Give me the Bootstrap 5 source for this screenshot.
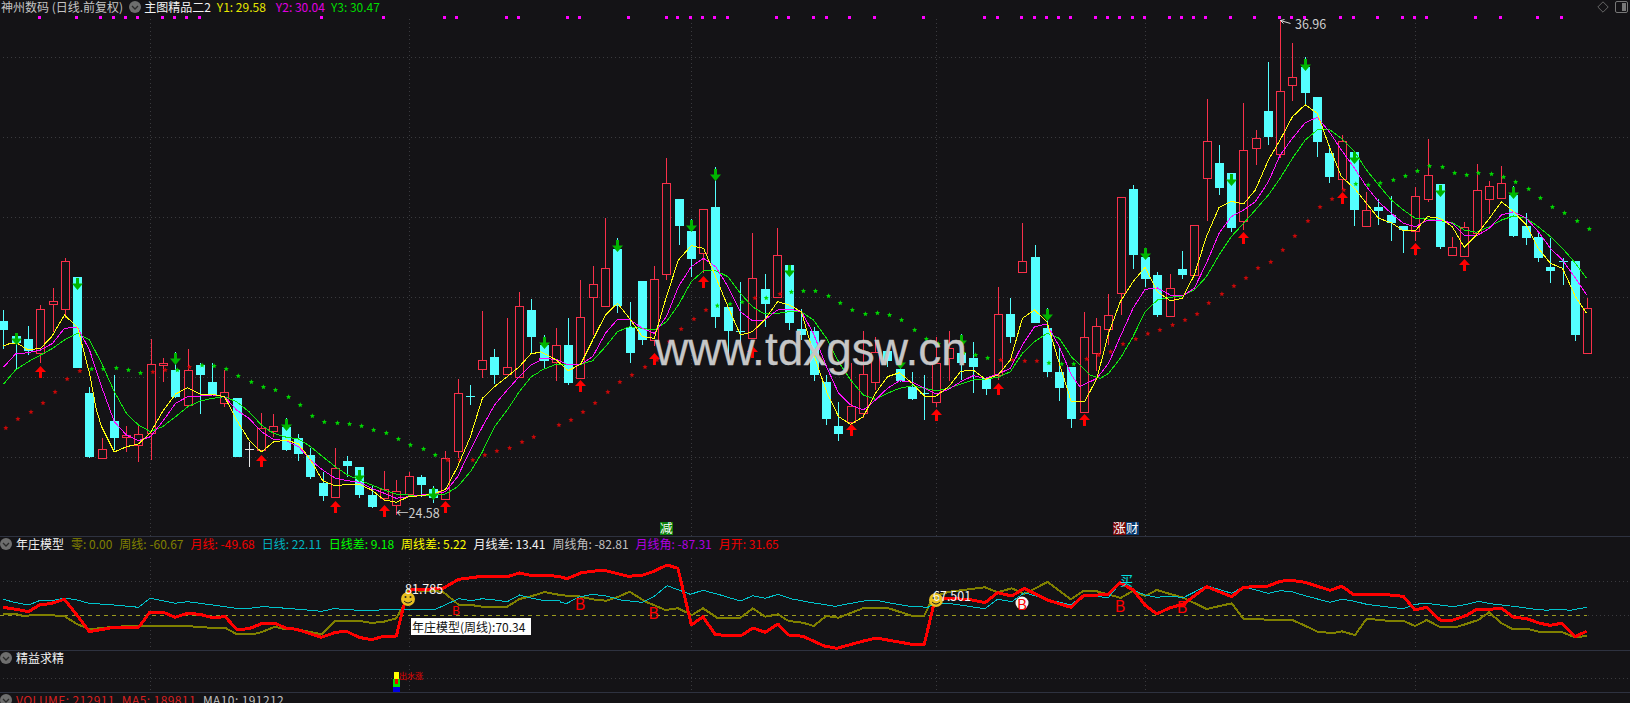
<!DOCTYPE html>
<html lang="zh-CN">
<head>
  <meta charset="UTF-8" />
  <meta name="viewport" content="width=device-width, initial-scale=1.0"/>
  <title>神州数码</title>
  <link href="https://cdn.jsdelivr.net/npm/bootstrap@5.3.3/dist/css/bootstrap.min.css" rel="stylesheet">
  <style>
    html, body { background: #141316; overflow: hidden; }
    .chart-app { height: 703px; width: 1630px; font-family: "Noto Sans CJK SC", "Liberation Sans", sans-serif; }
    .pane { border-bottom: 1px solid #2e3240; flex: none; }
    .pane-main { height: 537px; }
    .pane-model { height: 114px; }
    .pane-fine { height: 42px; }
    .pane-vol { height: 10px; border-bottom: 0; overflow: hidden; }
    .pane-head { height: 14px; font-size: 12px; line-height: 14px; white-space: nowrap; gap: 7px; padding-left: 1px; }
    .pane-main .pane-head { gap: 6px; }
    .pane-vol .pane-head { letter-spacing: .4px; }
    .pane svg.plot { display: block; }
    .chev { width: 12px; height: 12px; flex: none; }
    .chev-tight { margin-right: -3px; margin-left: -1px; }
    .shift-left { margin-left: -3px; }
    .c-title { color: #c4c4c4; }
    .c-y1 { color: #e8e800; }
    .c-y2 { color: #e000e0; }
    .c-y3 { color: #00dc00; }
    .c-olive { color: #808000; }
    .c-red { color: #f00000; }
    .c-teal { color: #00b4c0; }
    .c-lime { color: #00ff00; }
    .c-yellow { color: #ffff00; }
    .c-white { color: #f2f2f2; }
    .c-gray { color: #c0c0c0; }
    .c-purple { color: #b000e0; }
    .c-vol { color: #d82020; }
    .head-icons { right: 2px; top: 1px; gap: 6px; }
    .hint { left: 411px; top: 81px; width: 120px; height: 17px; background: #fff; color: #111; font-size: 12px; line-height: 17px; padding-left: 1px; white-space: nowrap; }
    text { font-family: "Noto Sans CJK SC", "Liberation Sans", sans-serif; }
    .grid { stroke: #3a3a3e; stroke-width: 1; stroke-dasharray: 1 3; shape-rendering: crispEdges; }
    .watermark { font-family: "Liberation Sans", Arial, sans-serif; font-size: 46px; fill: #c6c6c6; stroke: #c6c6c6; stroke-width: .3px; }
  </style>
</head>
<body>

<div class="chart-app d-flex flex-column">

  <!-- main chart -->
  <section class="pane pane-main position-relative">
    <div class="pane-head d-flex align-items-center">
      <span class="c-title">神州数码 (日线.前复权)</span>
      <svg class="chev" viewBox="0 0 12 12"><circle cx="6" cy="6" r="6" fill="#6e6e6e"/><path d="M3 5l3 3 3-3" fill="none" stroke="#2a2a2a" stroke-width="1.3"/></svg>
      <span class="c-white shift-left">主图精品二2</span>
      <span class="c-y1">Y1: 29.58</span>
      <span class="c-y2 ms-1">Y2: 30.04</span>
      <span class="c-y3">Y3: 30.47</span>
    </div>
    <div class="head-icons position-absolute d-flex align-items-center">
      <svg width="12" height="12" viewBox="0 0 12 12"><path d="M6 .8L11.2 6 6 11.2.8 6z" fill="none" stroke="#666"/></svg>
      <svg width="13" height="12" viewBox="0 0 13 12"><rect x=".5" y=".5" width="12" height="11" rx="1.5" fill="none" stroke="#777"/><rect x="7" y="2" width="4" height="8" fill="#777"/></svg>
    </div>
    <svg class="plot" width="1630" height="522" viewBox="0 14 1630 522">
      <g id="mainPlot"></g>
      <text x="396" y="518" fill="#cfcfcf" font-size="12.5">←24.58</text>
      <path d="M1280.5 20.5l10 3M1280.5 20.5l4-1M1280.5 20.5l3 3" stroke="#ddd" fill="none"/>
      <text x="1295" y="29" fill="#cfcfcf" font-size="12.5">36.96</text>
      <text class="watermark" x="655" y="365">www.tdxgsw.cn</text>
      <rect x="660" y="522" width="13" height="13" fill="#0a7d0a"/>
      <text x="660" y="533" fill="#fff" font-size="12.5">减</text>
      <rect x="1113" y="522" width="13" height="13" fill="#780808"/>
      <text x="1113" y="533" fill="#fff" font-size="12.5">涨</text>
      <rect x="1126" y="522" width="13" height="13" fill="#063a70"/>
      <text x="1126" y="533" fill="#fff" font-size="12.5">财</text>
    </svg>
  </section>

  <!-- year model -->
  <section class="pane pane-model position-relative">
    <div class="pane-head d-flex align-items-center">
      <svg class="chev chev-tight" viewBox="0 0 12 12"><circle cx="6" cy="6" r="6" fill="#6e6e6e"/><path d="M3 5l3 3 3-3" fill="none" stroke="#2a2a2a" stroke-width="1.3"/></svg>
      <span class="c-white">年庄模型</span>
      <span class="c-olive">零: 0.00</span>
      <span class="c-olive">周线: -60.67</span>
      <span class="c-red">月线: -49.68</span>
      <span class="c-teal">日线: 22.11</span>
      <span class="c-lime">日线差: 9.18</span>
      <span class="c-yellow">周线差: 5.22</span>
      <span class="c-white">月线差: 13.41</span>
      <span class="c-gray">周线角: -82.81</span>
      <span class="c-purple">月线角: -87.31</span>
      <span class="c-red">月开: 31.65</span>
    </div>
    <svg class="plot" width="1630" height="99" viewBox="0 551 1630 99">
      <g id="modelPlot"></g>
      <circle cx="408" cy="599" r="7" fill="#e8c020"/>
      <circle cx="405.5" cy="597" r="1" fill="#222"/><circle cx="410.5" cy="597" r="1" fill="#222"/>
      <path d="M404 601q4 4 8 0" fill="none" stroke="#222"/>
      <circle cx="936" cy="600" r="7" fill="#e8c020"/>
      <circle cx="933.5" cy="598" r="1" fill="#222"/><circle cx="938.5" cy="598" r="1" fill="#222"/>
      <path d="M932 602q4 4 8 0" fill="none" stroke="#222"/>
      <text x="405" y="594" fill="#f4f4f4" font-size="12.5">81.785</text>
      <text x="933" y="601" fill="#f4f4f4" font-size="12.5">67.501</text>
      <circle cx="1022" cy="603" r="6.5" fill="#f4f4f4"/>
      <text x="456" y="615" fill="#f00" font-size="12" text-anchor="middle">B</text>
      <text x="580" y="610" fill="#f00" font-size="16" text-anchor="middle">B</text>
      <text x="653.5" y="619" fill="#f00" font-size="16" text-anchor="middle">B</text>
      <text x="1022" y="610" fill="#f00" font-size="15" text-anchor="middle">B</text>
      <text x="1120" y="612" fill="#f00" font-size="16" text-anchor="middle">B</text>
      <text x="1182" y="613" fill="#f00" font-size="16" text-anchor="middle">B</text>
      <text x="1120" y="585" fill="#00e0e0" font-size="13">买</text>
    </svg>
    <div class="hint position-absolute">年庄模型(周线):70.34</div>
  </section>

  <!-- fine -->
  <section class="pane pane-fine">
    <div class="pane-head d-flex align-items-center">
      <svg class="chev chev-tight" viewBox="0 0 12 12"><circle cx="6" cy="6" r="6" fill="#6e6e6e"/><path d="M3 5l3 3 3-3" fill="none" stroke="#2a2a2a" stroke-width="1.3"/></svg>
      <span class="c-white">精益求精</span>
    </div>
    <svg class="plot" width="1630" height="27" viewBox="0 665 1630 27">
      <g id="finePlot"></g>
      <rect x="394" y="672" width="5" height="7" fill="#ffff00"/>
      <rect x="393" y="679" width="7" height="8" fill="#00e000"/>
      <rect x="395" y="679" width="3" height="5" fill="#f00000"/>
      <rect x="393" y="687" width="7" height="5" fill="#0000e0"/>
      <text x="399" y="679" fill="#f00000" font-size="8">出水涨</text>
    </svg>
  </section>

  <!-- volume, cut by window bottom -->
  <section class="pane pane-vol">
    <div class="pane-head d-flex align-items-center">
      <svg class="chev chev-tight" viewBox="0 0 12 12"><circle cx="6" cy="6" r="6" fill="#6e6e6e"/><path d="M3 5l3 3 3-3" fill="none" stroke="#2a2a2a" stroke-width="1.3"/></svg>
      <span class="c-vol">VOLUME: 212911</span>
      <span class="c-vol">MA5: 189811</span>
      <span class="c-gray">MA10: 191212</span>
    </div>
  </section>
</div>

<script>
  const BG = "#141316", RED = "#f8304a", CYAN = "#54ffff";
  const stepX = 12.277;
  const cx = i => Math.round(3.4 + stepX * i);

  // type (1 red, 0 cyan, 2 white), high, body top, body bottom, low
  const candles = [
    [0,310,321,330,349],[0,333,336,343,369],[0,326,339,351,355],[1,305,309,353,363],[1,288,301,304,332],
    [1,258,261,309,318],[0,277,277,368,368],[0,387,393,457,458],[1,438,449,458,458],[0,375,421,438,450],
    [1,426,435,437,452],[1,425,434,445,462],[1,339,364,433,460],[1,358,363,365,382],[0,352,370,397,398],
    [1,349,370,405,405],[0,363,365,375,414],[0,363,382,395,395],[1,370,392,403,407],[0,398,398,457,457],
    [2,442,449,450,467],[1,413,428,450,452],[1,414,426,431,437],[0,418,427,450,451],[0,434,438,454,461],
    [0,448,455,477,479],[0,472,483,496,501],[1,448,468,497,497],[0,456,461,466,477],[0,467,467,495,498],
    [0,485,495,507,508],[1,471,489,498,500],[1,480,491,505,515],[1,472,476,494,497],[0,475,477,485,497],
    [0,486,489,498,503],[1,451,458,499,500],[1,379,393,451,458],[0,385,396,397,405],[1,311,360,369,378],
    [0,349,357,375,384],[1,318,367,374,375],[1,292,306,377,378],[0,299,310,337,354],
    [0,335,345,361,368],[1,328,345,362,381],[0,318,345,383,385],[1,280,317,378,378],[1,266,284,297,335],
    [1,218,268,306,306],[0,238,249,306,313],[0,302,327,353,363],[0,281,281,340,345],[1,266,279,340,346],
    [1,158,183,274,280],[0,199,199,226,245],[0,219,231,259,277],[1,209,209,253,273],[0,167,207,317,328],
    [0,307,307,331,365],[0,282,331,332,350],[1,233,278,338,338],[0,274,289,304,327],[1,228,255,297,298],
    [0,265,265,323,330],[0,309,329,335,340],[0,327,331,375,381],[0,375,382,419,425],[0,402,426,434,441],
    [1,363,406,422,424],[1,331,374,413,418],[1,337,352,382,390],[0,351,351,361,367],[0,356,369,381,382],
    [0,372,387,399,400],[0,375,393,394,420],[1,337,363,402,407],[1,331,348,358,381],[0,334,353,363,380],
    [0,342,358,367,393],[0,378,378,389,395],[1,287,314,375,380],[0,298,314,337,343],[1,223,261,272,272],
    [0,245,257,323,323],[0,308,328,372,377],[0,347,372,388,401],[0,367,367,419,428],[1,312,337,412,412],
    [1,318,326,353,371],[1,294,315,329,345],[1,197,197,293,315],[0,185,189,255,269],[0,248,257,279,287],
    [0,272,275,315,317],[1,274,288,316,316],[0,251,269,275,279],[1,225,225,275,275],[1,99,141,178,221],
    [0,145,163,188,195],[0,173,173,228,232],[1,103,150,221,230],[1,130,138,148,165],[0,62,111,137,145],
    [1,20,91,154,158],[1,43,77,85,101],[0,57,67,93,105],[0,97,97,142,157],[0,145,153,177,183],
    [1,135,141,179,190],[0,152,152,210,226],[1,192,210,226,226],[0,199,207,211,225],[0,196,215,223,241],
    [0,226,226,230,253],[1,187,196,231,241],[1,139,175,199,202],[0,184,184,247,249],[1,237,247,255,256],
    [1,222,227,256,256],[1,164,190,233,233],[1,181,186,199,214],[1,166,183,198,198],[0,186,195,236,237],
    [0,213,226,238,245],[0,232,237,258,262],[0,238,267,271,283],[0,258,261,262,285],[0,261,261,335,341],
    [1,298,308,353,353]
  ];

  const downArrows = [[1,333],[6,278],[14,353],[23,419],[29,470],[35,488],[44,337],[50,240],[56,220],[58,169],[64,265],[73,357],[78,335],[85,309],[93,248],[100,174],[106,59],[110,152],[117,185],[123,187]];
  const upArrows = [[3,366],[21,455],[27,501],[31,505],[36,501],[47,380],[53,353],[57,276],[61,346],[69,424],[76,409],[81,383],[88,414],[101,232],[109,192],[115,243],[119,259]];

  // points read off the picture: offset x, offset y, x scale, flat x,y list
  function seg(ox, oy, sx, flat) {
    const out = [];
    for (let i = 0; i < flat.length; i += 2) out.push([ox + flat[i] / sx, oy + flat[i + 1] / 3]);
    return out;
  }
  const line = (pts, color, w) =>
    `<polyline points="${pts.map(p => p[0].toFixed(1) + "," + p[1].toFixed(1)).join(" ")}" fill="none" stroke="${color}" stroke-width="${w}" stroke-linejoin="round" shape-rendering="crispEdges"/>`;

  const S = 2.904;
  const yellow = [
    ...seg(0,240,S,[10,318,30,310,50,310,82,330,118,325,150,290,187,225,225,262,240,320,260,400,280,510,295,560,332,636,367,620,402,612,437,578,472,515,510,462,545,443,582,463,617,463,652,470,687,540,723,600,759,636,794,606,832,600,867,612,902,660,937,722,974,738,1009,733,1044,733,1079,750,1116,780,1151,787,1186,770,1223,767,1258,762,1294,748,1329,680,1366,590,1401,475,1436,440,1473,410,1508,380,1543,340,1568,338]),
    ...seg(540,130,S,[0,665,30,680,47,690,82,722,118,703,153,630,190,555,225,520,260,565,297,620,332,625,367,500,402,390,439,347,475,355,510,440,546,530,582,615,617,605,652,570,690,515,724,525,759,545,794,670,832,785,867,860,902,883,939,860,974,790,1009,740,1044,728,1081,760,1116,798,1151,798,1187,770,1222,724,1258,720,1294,748,1330,735,1366,690,1401,565,1436,540,1472,575,1508,700,1543,815,1568,815]),
    [1085,401],
    ...seg(1090,0,S,[20,1135,54,1000,88,905,125,845,160,802,196,875,233,902,268,895,303,825,338,710,375,622,410,604,446,612,480,570,518,480,552,420,588,350,625,314,660,340,695,440,730,530,768,565,803,610,838,655,875,668,910,692,945,692,980,650,1017,655,1052,680,1087,742,1122,705,1160,655,1195,605,1230,635,1267,675,1302,745,1337,790,1372,805,1410,890,1442,940])
  ];
  const magenta = [
    ...seg(0,240,S,[10,382,45,342,82,338,118,330,153,310,187,265,225,262,260,330,295,440,332,545,367,585,402,602,437,590,472,545,510,490,545,470,582,468,617,465,652,470,687,510,723,535,759,575,794,598,832,602,867,620,902,660,937,690,974,715,1009,722,1044,727,1079,745,1116,760,1151,775,1186,770,1223,765,1258,762,1294,755,1329,710,1366,630,1401,560,1436,495,1473,450,1508,410,1543,375,1568,362]),
    ...seg(540,130,S,[0,685,47,688,82,705,118,703,153,680,190,610,225,568,260,568,297,595,332,610,367,560,402,470,439,410,475,385,510,410,546,470,582,545,617,572,652,570,690,540,724,537,759,545,794,610,832,710,867,790,902,825,939,840,974,810,1009,775,1044,752,1081,757,1116,775,1151,792,1187,778,1222,755,1258,737,1294,745,1330,732,1366,715,1401,645,1436,590,1472,582,1508,650,1543,735,1568,770]),
    ...seg(1090,0,S,[20,1135,54,1090,88,1010,125,925,160,868,196,864,233,885,268,888,303,865,338,790,375,700,410,650,446,630,480,605,518,545,552,465,588,415,625,368,660,352,695,395,730,450,768,505,803,560,838,605,875,640,910,670,945,680,980,660,1017,660,1052,670,1087,705,1122,708,1160,685,1195,645,1230,635,1267,655,1302,695,1337,745,1372,780,1410,835,1442,885])
  ];
  const green = [
    ...seg(0,240,S,[10,433,45,390,82,365,118,345,153,325,187,300,225,280,260,300,295,370,332,455,367,520,402,555,437,575,472,560,510,530,545,500,582,483,617,475,652,470,687,485,723,515,759,555,794,580,832,592,867,597,902,620,937,650,974,680,1009,705,1044,720,1079,735,1116,750,1151,762,1186,765,1223,765,1258,765,1294,762,1329,740,1366,695,1401,635,1436,560,1473,510,1508,455,1543,410,1568,395]),
    ...seg(540,130,S,[0,722,47,703,82,703,118,703,153,692,190,650,225,605,260,590,297,595,332,600,367,575,402,525,439,455,475,422,510,422,546,440,582,490,617,530,652,552,690,550,724,545,759,545,794,570,832,625,867,695,902,750,939,795,974,808,1009,790,1044,775,1081,767,1116,775,1151,782,1187,775,1222,762,1258,750,1294,747,1330,742,1366,725,1401,670,1436,635,1472,610,1508,625,1543,680,1568,705]),
    ...seg(1090,0,S,[0,1125,30,1135,54,1120,88,1075,125,1010,160,935,196,900,233,892,268,888,303,870,338,830,375,765,410,710,446,670,480,630,518,585,552,535,588,475,625,420,660,390,695,388,730,415,768,455,803,510,838,555,875,600,910,630,945,655,980,657,1017,662,1052,668,1087,690,1122,697,1160,680,1195,660,1230,648,1267,655,1302,680,1337,710,1372,745,1410,790,1442,835])
  ];

  const redStars = [
    ...seg(0,240,S,[17,564,52,537,90,516,125,489,160,456,195,417,232,393,444,396,480,390,550,381,1300,660,1335,660,1373,660,1408,645,1443,633,1480,624,1516,606,1550,591]),
    ...seg(540,130,S,[55,885,90,870,125,846,160,819,197,786,232,756,267,735,305,711,340,690,375,635,410,597,447,567,482,540,624,504,697,492,1338,690,1373,690,1408,693,1443,693]),
    [1086.7,359],
    ...seg(1090,0,S,[25,1065,60,1055,96,1032,133,1017,168,1001,203,990,240,975,276,960,311,942,345,909,383,882,418,858,453,834,488,804,525,786,560,750,595,708,633,663,668,621,703,597,737,570])
  ];
  const greenStars = [
    ...seg(0,240,S,[266,387,300,387,338,384,373,390,408,399,515,390,587,376,622,378,657,387,692,408,730,426,765,441,800,450,838,471,872,495,907,528,942,546,980,549,1015,552,1050,558,1085,570,1122,579,1157,597,1192,615,1230,627,1264,645]),
    ...seg(540,130,S,[515,527,552,522,587,516,657,504,730,486,765,483,800,483,838,498,872,519,907,540,945,552,980,549,1015,555,1050,570,1088,600,1122,627,1157,642,1230,669,1265,675,1300,684,1478,699,1515,702,1550,702]),
    ...seg(1090,0,S,[772,552,808,555,843,549,881,540,916,528,951,513,986,498,1024,501,1059,519,1094,525,1128,519,1166,522,1201,531,1236,546,1274,567,1308,594,1343,621,1378,639,1415,663,1450,687])
  ];

  const topDots = [
    ...seg(0,0,S,[114,52,221,52,291,52,329,52,364,52,399,52,471,52,506,52,541,52,579,52,933,52,1113,52,1290,52,1325,52,1470,52,1505,52]),
    ...seg(540,0,2.851,[78,52,112,52,252,52,358,52,392,52,429,52,463,52,497,52,534,52,674,52,708,52,777,52,814,52,882,52,953,52,1093,52,1267,52,1304,52,1372,52,1407,52,1443,52,1477,52,1512,52]),
    ...seg(1090,0,S,[15,52,50,52,85,52,123,52,158,52,230,52,265,52,300,52,335,52,407,52,477,52,550,52,585,52,622,52,727,52,764,52,834,52,907,52,942,52,977,52,1119,52,1191,52,1299,52,1369,52])
  ];

  function star(x, y, color) {
    let pts = "";
    for (let i = 0; i < 10; i++) {
      const r = i % 2 ? 1.2 : 2.7, a = -Math.PI / 2 + i * Math.PI / 5;
      pts += (x + r * Math.cos(a)).toFixed(1) + "," + (y + r * Math.sin(a)).toFixed(1) + " ";
    }
    return `<polygon points="${pts}" fill="${color}"/>`;
  }
  const vGrid = [150, 409, 691, 936, 1145, 1415];
  const hLine = (y, from = 3) => `<line class="grid" x1="${from}" y1="${y + .5}" x2="1630" y2="${y + .5}"/>`;
  const vLines = (y1, y2) => vGrid.map(x => `<line class="grid" x1="${x + .5}" y1="${y1}" x2="${x + .5}" y2="${y2}"/>`).join("");

  // ---- main pane
  let html = "";
  [57, 137, 217, 297, 377, 457].forEach(y => html += hLine(y));
  html += vLines(19, 536);
  topDots.forEach(p => html += `<rect x="${Math.round(p[0]) - 1.5}" y="15.5" width="3" height="3" fill="#ff00ff" shape-rendering="crispEdges"/>`);

  candles.forEach((c, i) => {
    const [t, hi, top, bot, lo] = c, x = cx(i), col = t === 1 ? RED : t === 2 ? "#e8e8e8" : CYAN;
    html += `<line x1="${x + .5}" y1="${hi}" x2="${x + .5}" y2="${lo}" stroke="${col}" shape-rendering="crispEdges"/>`;
    if (t === 1) html += `<rect x="${x - 3.5}" y="${top + .5}" width="8" height="${bot - top}" fill="${BG}" stroke="${col}" shape-rendering="crispEdges"/>`;
    else html += `<rect x="${x - 4}" y="${top}" width="9" height="${Math.max(bot - top, 1)}" fill="${col}" shape-rendering="crispEdges"/>`;
  });

  redStars.forEach(p => html += star(p[0], p[1], "#c80808"));
  greenStars.forEach(p => html += star(p[0], p[1], "#00d800"));
  html += line(green, "#10e810", 1) + line(magenta, "#ff10ff", 1) + line(yellow, "#ffff10", 1);

  downArrows.forEach(([i, y]) => {
    const x = cx(i) + .5;
    html += `<path d="M${x - 1.5} ${y}h3v5.5h4l-5.5 6.5-5.5-6.5h4z" fill="#00b400"/>`;
  });
  upArrows.forEach(([i, y]) => {
    const x = cx(i) + .5;
    html += `<path d="M${x} ${y}l5.5 6h-4v6h-3v-6h-4z" fill="#ff0000"/>`;
  });
  document.getElementById("mainPlot").innerHTML = html;

  // ---- model pane
  const cyanLine = [
    ...seg(0,510,2.8,[8,268,45,278,80,285,110,272,145,272,180,264,215,270,250,280,320,285,388,292,420,265,455,272,490,280,525,275,560,280,630,290,660,295,700,295,735,290,770,292,800,295,860,300,900,304,935,296,990,300,1060,300,1110,298,1180,298,1215,300,1250,283,1285,266,1320,272,1350,266,1385,270,1420,275,1455,255,1490,265,1525,272,1568,272]),
    ...seg(560,510,2.8,[0,278,20,280,50,262,90,253,130,258,170,270,230,277,260,262,300,227,365,253,400,241,440,252,505,273,540,257,575,265,610,253,650,267,700,277,770,289,850,273,885,271,920,278,975,288,1030,292,1050,280,1100,282,1190,296,1225,268,1265,275,1300,248,1365,268,1430,285,1465,255,1535,263,1568,220]),
    ...seg(1120,510,3,[0,218,40,240,75,255,110,262,150,258,190,263,260,227,335,250,370,230,445,250,480,242,515,245,555,257,630,277,665,268,700,273,740,283,810,292,850,296,885,283,920,280,960,285,1000,290,1040,283,1075,274,1110,281,1190,290,1240,297,1280,301,1315,297,1350,301,1400,292])
  ];
  const oliveLine = [
    ...seg(0,510,2.8,[8,312,45,312,65,318,110,314,180,318,215,342,250,358,320,350,388,348,490,348,560,350,590,354,630,353,660,371,715,371,735,365,770,350,800,358,830,358,900,373,940,332,1005,332,1040,339,1075,335,1110,325,1130,285,1140,240,1240,245,1285,285,1320,285,1350,290,1420,290,1455,267,1490,258,1525,246,1568,255]),
    ...seg(560,510,2.8,[0,256,50,258,90,268,130,272,160,262,195,245,240,275,295,300,330,295,370,315,400,295,440,323,505,323,540,295,575,320,610,313,640,333,680,338,710,348,745,318,780,323,850,294,920,295,985,317,1020,317,1045,260,1090,245,1190,232,1225,247,1265,235,1300,252,1365,216,1430,268,1465,243,1500,243,1568,263]),
    ...seg(1120,510,3,[0,265,40,242,75,258,110,240,150,252,190,263,260,297,335,280,370,326,445,329,515,329,555,347,595,366,640,369,665,364,705,375,740,326,800,332,850,332,885,348,920,330,960,351,1010,351,1075,330,1107,307,1145,340,1175,356,1220,356,1260,366,1325,366,1365,382,1400,378])
  ];
  const redLine = [
    ...seg(0,510,2.8,[8,292,45,298,80,305,110,285,145,280,180,268,215,315,250,365,320,352,388,352,420,306,455,306,490,322,525,310,560,313,595,323,630,320,665,360,700,355,735,340,770,340,800,354,830,358,900,382,940,367,970,364,1005,382,1040,389,1075,379,1110,378,1130,288,1150,240,1240,235,1285,208,1350,199,1420,200,1455,189,1490,197,1535,196,1568,200]),
    ...seg(560,510,2.8,[0,200,20,206,60,188,120,180,190,199,230,196,260,185,300,165,330,175,368,345,400,320,435,374,505,378,540,354,575,367,610,342,640,375,680,379,740,408,775,415,850,393,885,384,985,403,1020,403,1045,290,1060,265,1145,268,1190,278,1225,248,1265,258,1300,235,1365,270,1430,292,1465,258,1535,253,1568,218]),
    ...seg(1120,510,3,[0,218,40,240,75,285,110,312,150,293,190,283,260,230,335,260,370,232,445,228,480,214,515,211,555,217,630,241,665,229,700,253,790,253,850,259,885,300,920,292,960,330,1000,330,1040,316,1070,298,1110,298,1145,295,1180,321,1220,326,1260,340,1290,346,1325,340,1365,380,1400,364])
  ];
  html = hLine(581) + vLines(558, 650) + hLine(615, 1588);
  html += `<line x1="0" y1="615.5" x2="1587" y2="615.5" stroke="#9a9a20" stroke-dasharray="4 4" shape-rendering="crispEdges"/>`;
  html += line(oliveLine, "#808000", 2) + line(cyanLine, "#00c4cc", 1) + line(redLine, "#ff0000", 3);
  document.getElementById("modelPlot").innerHTML = html;

  // ---- fine pane
  document.getElementById("finePlot").innerHTML = hLine(678) + vLines(665, 692);
</script>

<script src="https://cdn.jsdelivr.net/npm/bootstrap@5.3.3/dist/js/bootstrap.bundle.min.js"></script>
</body>
</html>
